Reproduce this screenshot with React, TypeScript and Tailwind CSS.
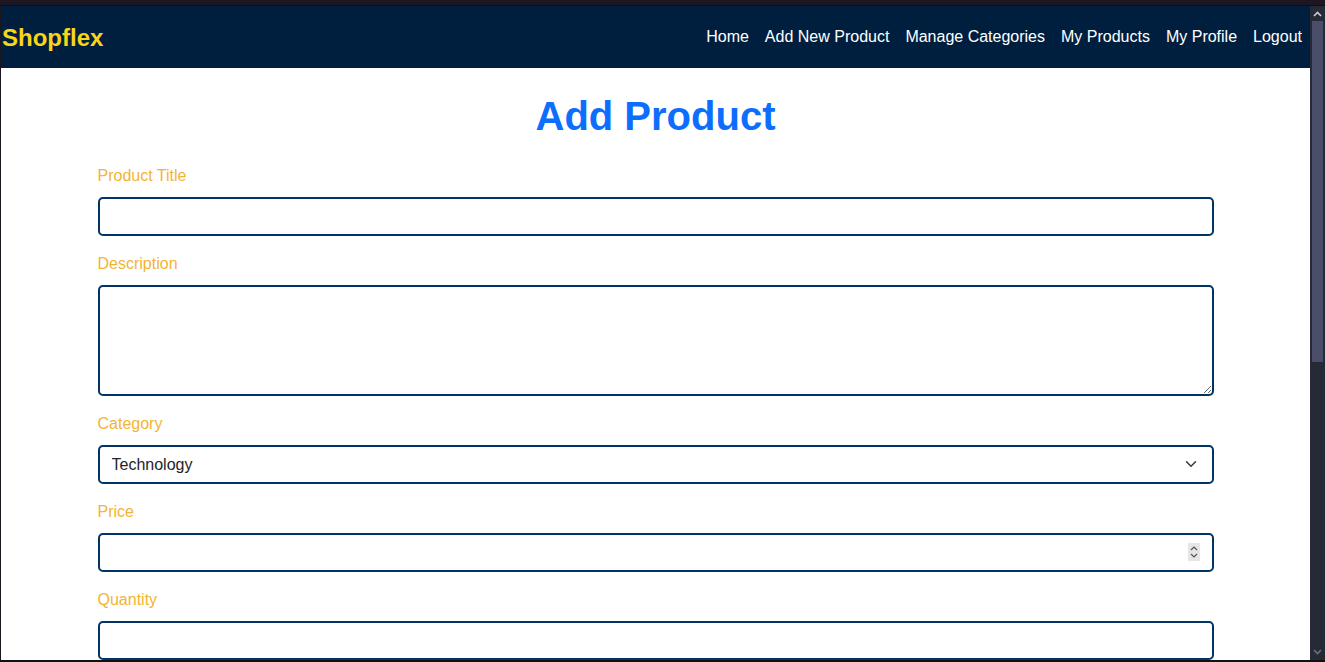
import React from 'react';

const links = ['Home', 'Add New Product', 'Manage Categories', 'My Products', 'My Profile', 'Logout'];

const Field: React.FC<{ label: string; children: React.ReactNode }> = ({ label, children }) => (
  <div className="mb-[18px]">
    <label className="block h-5 leading-5 mb-[11px] text-[16px] text-[#f2b433]">{label}</label>
    {children}
  </div>
);

const inputCls =
  'block w-full h-[39px] rounded-[5px] border-2 border-[#003366] bg-white px-3 text-[16px] text-[#212529] outline-none';

export default function App() {
  return (
    <div className="h-screen w-full overflow-hidden flex flex-col bg-[#1a1620] font-['Liberation_Sans',Arial,sans-serif]">
      <div className="h-[6px] shrink-0 bg-[#1c1722] border-b border-[#0f0c14]" />
      <div className="flex flex-1 min-h-0">
        <div className="w-px shrink-0 bg-[#1a1620]" />
        <div className="flex-1 min-w-0 bg-white overflow-hidden">
          {/* Navbar */}
          <nav className="h-[62px] bg-[#001f3f] flex items-center justify-between pl-px pr-2">
            <span className="text-[24px] font-bold text-[#fad419] leading-none mt-[2px]">Shopflex</span>
            <div className="flex items-center gap-4 text-[16px] text-white">
              {links.map(l => (
                <a key={l} className="cursor-pointer">{l}</a>
              ))}
            </div>
          </nav>

          <h1 className="mt-6 text-center text-[40px] leading-[48px] font-bold text-[#0d6efd]">Add Product</h1>

          <form className="w-[1116px] mx-auto mt-[26px]">
            <Field label="Product Title">
              <input type="text" className={inputCls} />
            </Field>
            <Field label="Description">
              <textarea className="block w-full h-[111px] rounded-[5px] border-2 border-[#003366] bg-white px-3 py-2 text-[16px] outline-none" />
            </Field>
            <Field label="Category">
              <div className="relative">
                <select className={`${inputCls} appearance-none`} defaultValue="Technology">
                  <option>Technology</option>
                  <option>Fashion</option>
                  <option>Home</option>
                </select>
                <svg className="absolute right-[17px] top-[13px] w-3 h-3 pointer-events-none" viewBox="0 0 16 16" fill="none">
                  <path d="M2 5l6 6 6-6" stroke="#343a40" strokeWidth="2" strokeLinecap="round" strokeLinejoin="round" />
                </svg>
              </div>
            </Field>
            <Field label="Price">
              <div className="relative">
                <input type="text" className={inputCls} />
                <div className="absolute right-[14px] top-[10px] w-[12px] h-[18px] bg-[#e6e6e6] flex flex-col items-center justify-center gap-[2px]">
                  <svg className="w-[8px] h-[5px]" viewBox="0 0 8 5" fill="none">
                    <path d="M1 4l3-3 3 3" stroke="#555" strokeWidth="1.2" />
                  </svg>
                  <svg className="w-[8px] h-[5px]" viewBox="0 0 8 5" fill="none">
                    <path d="M1 1l3 3 3-3" stroke="#555" strokeWidth="1.2" />
                  </svg>
                </div>
              </div>
            </Field>
            <Field label="Quantity">
              <input type="text" className={inputCls} />
            </Field>
          </form>
        </div>
        {/* Scrollbar */}
        <div className="w-[15px] shrink-0 bg-[#262a36] flex flex-col items-center">
          <svg className="w-[9px] h-[6px] mt-[5px] shrink-0" viewBox="0 0 9 6" fill="none">
            <path d="M1 5l3.5-3.5L8 5" stroke="#c9cbd6" strokeWidth="1.6" />
          </svg>
          <div className="w-[11px] h-[341px] mt-[4px] bg-[#4b4e69] shrink-0" />
          <div className="flex-1" />
          <svg className="w-[9px] h-[6px] mb-[5px] shrink-0" viewBox="0 0 9 6" fill="none">
            <path d="M1 1l3.5 3.5L8 1" stroke="#6d7080" strokeWidth="1.6" />
          </svg>
        </div>
      </div>
      <div className="h-[2px] shrink-0 bg-[#111]" />
    </div>
  );
}
